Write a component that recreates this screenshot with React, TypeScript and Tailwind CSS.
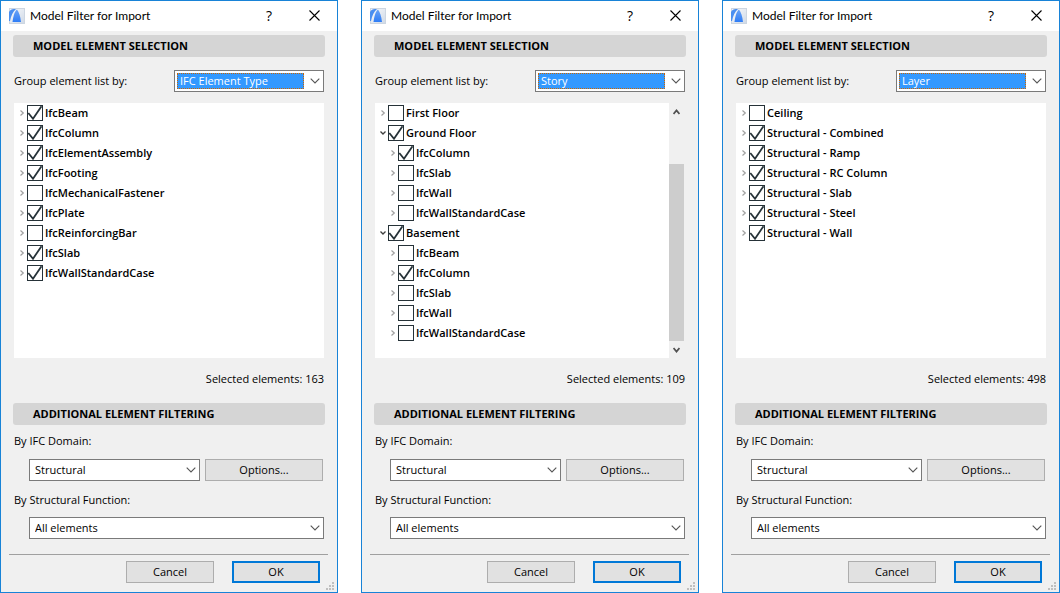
import { useId } from 'react'

interface TreeItem {
  label: string
  checked?: boolean
  open?: boolean
  level?: number
}

interface FilterDialogProps {
  groupBy: string
  items: TreeItem[]
  selected: number
  scrollable?: boolean
}

const groupOptions = ['IFC Element Type', 'Story', 'Layer']

const dialogs: FilterDialogProps[] = [
  {
    groupBy: 'IFC Element Type',
    selected: 163,
    items: [
      { label: 'IfcBeam', checked: true },
      { label: 'IfcColumn', checked: true },
      { label: 'IfcElementAssembly', checked: true },
      { label: 'IfcFooting', checked: true },
      { label: 'IfcMechanicalFastener' },
      { label: 'IfcPlate', checked: true },
      { label: 'IfcReinforcingBar' },
      { label: 'IfcSlab', checked: true },
      { label: 'IfcWallStandardCase', checked: true },
    ],
  },
  {
    groupBy: 'Story',
    selected: 109,
    scrollable: true,
    items: [
      { label: 'First Floor' },
      { label: 'Ground Floor', checked: true, open: true },
      { label: 'IfcColumn', checked: true, level: 1 },
      { label: 'IfcSlab', level: 1 },
      { label: 'IfcWall', level: 1 },
      { label: 'IfcWallStandardCase', level: 1 },
      { label: 'Basement', checked: true, open: true },
      { label: 'IfcBeam', level: 1 },
      { label: 'IfcColumn', checked: true, level: 1 },
      { label: 'IfcSlab', level: 1 },
      { label: 'IfcWall', level: 1 },
      { label: 'IfcWallStandardCase', level: 1 },
    ],
  },
  {
    groupBy: 'Layer',
    selected: 498,
    items: [
      { label: 'Ceiling' },
      { label: 'Structural - Combined', checked: true },
      { label: 'Structural - Ramp', checked: true },
      { label: 'Structural - RC Column', checked: true },
      { label: 'Structural - Slab', checked: true },
      { label: 'Structural - Steel', checked: true },
      { label: 'Structural - Wall', checked: true },
    ],
  },
]

function AppIcon() {
  return (
    <svg width="16" height="16" viewBox="0 0 16 16" className="shrink-0">
      <defs>
        <linearGradient id="tile" x1="0" y1="0" x2="1" y2="1">
          <stop offset="0" stopColor="#fafbfd" />
          <stop offset="1" stopColor="#cfd9e6" />
        </linearGradient>
        <linearGradient id="arc" x1="0" y1="0" x2="0" y2="1">
          <stop offset="0" stopColor="#6ba4f5" />
          <stop offset="1" stopColor="#2f7df6" />
        </linearGradient>
      </defs>
      <rect x="0.5" y="0.5" width="15" height="15" fill="url(#tile)" stroke="#cdd6e1" />
      <path d="M0 13V4C1 2 2.500 1 5 1H7C4 3.500 2 8 1 13Z" fill="#4a8ff0" />
      <path d="M3.500 14C4.300 8 5.500 3.500 8 1.500C10 4 11.300 8 12 14Z" fill="url(#arc)" />
    </svg>
  )
}

function Chevron() {
  return (
    <svg width="10" height="6" viewBox="0 0 10 6" fill="none" stroke="#555" strokeWidth="1.1" className="pointer-events-none">
      <path d="M0.700 0.700L5 5L9.300 0.700" />
    </svg>
  )
}

function SectionHeader({ children }: { children: string }) {
  return (
    <h2 className="flex h-[22px] items-center rounded-[3px] bg-[#d5d5d5] pl-5 text-[11px] font-bold">
      {children}
    </h2>
  )
}

function SelectBox({ id, value, className }: { id: string; value: string; className: string }) {
  return (
    <div className={`relative flex h-[22px] items-center border border-[#7a7a7a] bg-white ${className}`}>
      <select id={id} defaultValue={value} className="h-full w-full appearance-none pl-[5px] outline-none">
        <option>{value}</option>
      </select>
      <div className="pointer-events-none absolute right-[3px]">
        <Chevron />
      </div>
    </div>
  )
}

function TreeRow({ label, checked, open, level }: TreeItem) {
  const id = useId()

  return (
    <li className={`flex h-5 items-center ${level ? 'pl-[13px]' : 'pl-[3px]'}`}>
      <button aria-label={open ? 'Collapse' : 'Expand'} className="flex w-[10px] shrink-0 items-center justify-center">
        {open ? (
          <svg width="6" height="6" viewBox="0 0 6 6" fill="none" stroke="#404040" strokeWidth="1.3">
            <path d="M0.500 1.500L3 4L5.500 1.500" />
          </svg>
        ) : (
          <svg width="6" height="6" viewBox="0 0 6 6" fill="none" stroke="#a0a0a0" strokeWidth="1.2">
            <path d="M1.500 0.500L4.300 3L1.500 5.500" />
          </svg>
        )}
      </button>
      <div className="relative size-4 shrink-0">
        <input
          id={id}
          type="checkbox"
          defaultChecked={checked}
          className="peer block size-4 appearance-none border border-[#263238] bg-white"
        />
        <svg
          viewBox="0 0 16 16"
          fill="none"
          stroke="#263238"
          strokeWidth="1.8"
          className="pointer-events-none invisible absolute inset-0 size-4 peer-checked:visible"
        >
          <path d="M1.300 8L6 13.700L14.500 1.200" />
        </svg>
      </div>
      <label htmlFor={id} className="pl-0.5 font-semibold">
        {label}
      </label>
    </li>
  )
}

function ScrollBar() {
  return (
    <div className="flex w-4 flex-col bg-[#f0f0f0] pr-px">
      <button aria-label="Scroll up" className="flex h-[17px] items-center justify-center">
        <svg width="7" height="6" viewBox="0 0 7 6" fill="none" stroke="#505050" strokeWidth="1.8">
          <path d="M0.500 5L3.500 1.500L6.500 5" />
        </svg>
      </button>
      <div className="flex grow flex-col justify-end">
        <div className="h-4/5 bg-[#cdcdcd]" />
      </div>
      <button aria-label="Scroll down" className="flex h-[17px] items-center justify-center">
        <svg width="7" height="6" viewBox="0 0 7 6" fill="none" stroke="#505050" strokeWidth="1.8">
          <path d="M0.500 1L3.500 4.500L6.500 1" />
        </svg>
      </button>
    </div>
  )
}

function FilterDialog({ groupBy, items, selected, scrollable }: FilterDialogProps) {
  const id = useId()

  return (
    <section className="relative border border-[#1883d7] bg-[#f0f0f0]">
      {/* Title bar */}
      <header className="flex h-[30px] items-center bg-white pl-2 text-xs">
        <AppIcon />
        <h1 className="grow pl-[5px] font-['Lato','Open_Sans',sans-serif]">Model Filter for Import</h1>
        <button aria-label="Help" className="w-11 text-sm font-medium">
          ?
        </button>
        <button aria-label="Close" className="flex w-[46px] justify-center">
          <svg width="11" height="12" viewBox="0 0 11 12" stroke="#000" strokeWidth="1.1">
            <path d="M0.500 0.500L10.500 10.500M10.500 0.500L0.500 10.500" />
          </svg>
        </button>
      </header>

      <div className="px-3 pt-1">
        <SectionHeader>MODEL ELEMENT SELECTION</SectionHeader>

        <div className="flex items-center justify-between px-px pt-[13px] pb-[11px]">
          <label htmlFor={`${id}-group`}>Group element list by:</label>
          <div className="flex h-[22px] w-[150px] items-center border border-[#7a7a7a] bg-white p-[2px]">
            <select
              id={`${id}-group`}
              defaultValue={groupBy}
              className="h-4 grow appearance-none border border-dotted border-[#cc6600] bg-[#3399ff] pl-[2px] leading-[14px] text-white outline-none"
            >
              {groupOptions.map((option) => (
                <option key={option}>{option}</option>
              ))}
            </select>
            <div className="flex w-[17px] justify-center pl-1">
              <Chevron />
            </div>
          </div>
        </div>

        {/* Element tree */}
        <div className="mx-px flex min-h-[255px] bg-white">
          <ul className="grow">
            {items.map((item, index) => (
              <TreeRow key={index} {...item} />
            ))}
          </ul>
          {scrollable && <ScrollBar />}
        </div>

        <p className="px-px pt-[13px] pb-4 text-right">Selected elements: {selected}</p>

        <SectionHeader>ADDITIONAL ELEMENT FILTERING</SectionHeader>

        <div className="px-px pt-2">
          <label htmlFor={`${id}-domain`} className="block">
            By IFC Domain:
          </label>
          <div className="flex gap-[5px] pt-[10px] pr-px pl-[15px]">
            <SelectBox id={`${id}-domain`} value="Structural" className="grow" />
            <button className="h-[22px] w-[118px] border border-[#adadad] bg-[#e1e1e1]">Options...</button>
          </div>
          <label htmlFor={`${id}-function`} className="block pt-[11px]">
            By Structural Function:
          </label>
          <div className="pt-[9px] pl-[15px]">
            <SelectBox id={`${id}-function`} value="All elements" className="w-full" />
          </div>
        </div>
      </div>

      <footer className="mt-[15px] mr-[9px] ml-2 flex justify-end gap-[18px] border-t border-[#a0a0a0] pt-1.5 pr-2 pb-[9px]">
        <button className="h-[22px] w-[88px] border border-[#adadad] bg-[#e1e1e1]">Cancel</button>
        <button className="h-[22px] w-[88px] border-2 border-[#0078d7] bg-[#e1e1e1]">OK</button>
      </footer>

      {/* Resize grip */}
      <svg width="8" height="8" viewBox="0 0 8 8" fill="#bfbfbf" className="absolute right-[3px] bottom-[2px]">
        <path d="M6 0h2v2H6zM3 3h2v2H3zM6 3h2v2H6zM0 6h2v2H0zM3 6h2v2H3zM6 6h2v2H6z" />
      </svg>
    </section>
  )
}

export default function App() {
  return (
    <main className="grid grid-cols-3 gap-[23px] bg-white font-['Open_Sans','Noto_Sans',sans-serif] text-[11px] leading-4 text-black">
      {dialogs.map((dialog) => (
        <FilterDialog key={dialog.groupBy} {...dialog} />
      ))}
    </main>
  )
}
